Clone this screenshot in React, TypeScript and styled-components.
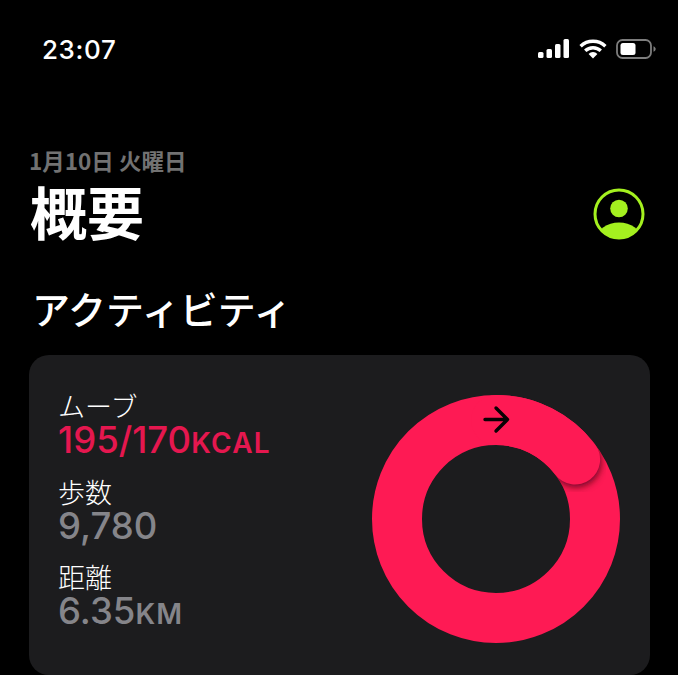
import React from "react";
import styled, { createGlobalStyle } from "styled-components";

const CJK = `"Noto Sans CJK JP", "Liberation Sans", sans-serif`;
const LATIN = `Inter, "Liberation Sans", "Noto Sans CJK JP", sans-serif`;

const App = () => (
  <>
    <GlobalStyle />
    <Page>
      <StatusBar>
        <Time>23:07</Time>
        <StatusIcons>
          <SignalIcon />
          <WifiIcon />
          <BatteryIcon />
        </StatusIcons>
      </StatusBar>

      <Header>
        <div>
          <DateLine>1月10日 火曜日</DateLine>
          <Title>概要</Title>
        </div>
        <ProfileIcon />
      </Header>

      <SectionTitle>アクティビティ</SectionTitle>

      <Card>
        <Stats>
          <Stat>
            <Label>ムーブ</Label>
            <Value $accent>
              195/170<Unit>KCAL</Unit>
            </Value>
          </Stat>
          <Stat>
            <Label>歩数</Label>
            <Value>9,780</Value>
          </Stat>
          <Stat>
            <Label>距離</Label>
            <Value>
              6.35<Unit>KM</Unit>
            </Value>
          </Stat>
        </Stats>
        <MoveRing />
      </Card>
    </Page>
  </>
);

export default App;

const SignalIcon = () => (
  <svg width="32" height="20" viewBox="0 0 32 20" fill="#fff">
    <rect x="0" y="13" width="5.5" height="6" rx="1.5" />
    <rect x="8.5" y="10" width="5.5" height="9" rx="1.5" />
    <rect x="17" y="5" width="5.5" height="14" rx="1.5" />
    <rect x="25.5" y="0" width="5.5" height="19" rx="1.5" />
  </svg>
);

const WifiIcon = () => (
  <svg width="28" height="20" viewBox="0 0 28 20" fill="none" stroke="#fff" strokeWidth="3.4">
    <path d="M1.6 7.2a18 18 0 0 1 24.8 0" />
    <path d="M6.2 11.8a11.4 11.4 0 0 1 15.6 0" />
    <path d="M14 19.4l-4.4-4.5a6.2 6.2 0 0 1 8.8 0z" fill="#fff" stroke="none" />
  </svg>
);

const BatteryIcon = () => (
  <svg width="40" height="20" viewBox="0 0 40 20" fill="none">
    <rect x="1" y="1" width="34" height="18" rx="5.5" stroke="#7d7d7d" strokeWidth="1.8" />
    <rect x="4.5" y="4" width="15" height="12" rx="2.5" fill="#fff" />
    <path d="M37.5 7.2v5.6c1.3-.5 2.2-1.6 2.2-2.8s-.9-2.3-2.2-2.8z" fill="#7d7d7d" />
  </svg>
);

const ProfileIcon = () => (
  <ProfileSvg width="52" height="52" viewBox="0 0 52 52">
    <defs>
      <clipPath id="profileClip">
        <circle cx="26" cy="26" r="24" />
      </clipPath>
    </defs>
    <circle cx="26" cy="26" r="24" fill="none" stroke="#a4f01f" strokeWidth="3" />
    <circle cx="26" cy="20.5" r="8.8" fill="#a4f01f" />
    <ellipse cx="26" cy="50.5" rx="22" ry="16" fill="#a4f01f" clipPath="url(#profileClip)" />
  </ProfileSvg>
);

const MoveRing = () => (
  <RingSvg width="250" height="250" viewBox="0 0 250 250">
    <defs>
      <filter id="capBlur" x="-30%" y="-30%" width="160%" height="160%">
        <feGaussianBlur stdDeviation="3.5" />
      </filter>
      <mask id="ringMask">
        <circle cx="125" cy="125" r="99" fill="none" stroke="#fff" strokeWidth="50" />
      </mask>
    </defs>
    <circle cx="125" cy="125" r="99" fill="none" stroke="#fe1a54" strokeWidth="50" />
    <g mask="url(#ringMask)">
      <circle cx="205" cy="68" r="25" fill="#3a0412" fillOpacity="0.75" filter="url(#capBlur)" />
    </g>
    <path
      d="M125 26A99 99 0 0 1 204.1 65.5"
      fill="none"
      stroke="#fe1a54"
      strokeWidth="50"
      strokeLinecap="round"
    />
    <path
      d="M114 25.5H136.5M125 14l11.5 11.5L125 37"
      fill="none"
      stroke="#0a0204"
      strokeWidth="3.4"
      strokeLinecap="round"
      strokeLinejoin="round"
    />
  </RingSvg>
);

const GlobalStyle = createGlobalStyle`
  html, body {
    margin: 0;
    background: #000;
  }
`;

const Page = styled.div`
  width: 678px;
  height: 675px;
  overflow: hidden;
  background: #000;
  color: #fff;
  box-sizing: border-box;
  padding: 30px 28px 0 29px;
`;

const StatusBar = styled.div`
  display: flex;
  align-items: center;
  justify-content: space-between;
  height: 38px;
  padding-left: 13px;
  margin-right: -6px;
`;

const Time = styled.div`
  font-family: ${LATIN};
  font-size: 26px;
  font-weight: 500;
  letter-spacing: 0.6px;
`;

const StatusIcons = styled.div`
  display: flex;
  align-items: center;
  gap: 9px;
`;

const Header = styled.div`
  display: flex;
  align-items: flex-end;
  justify-content: space-between;
  margin-top: 79px;
  padding-right: 5px;
`;

const ProfileSvg = styled.svg`
  flex: none;
  margin-bottom: 2px;
`;

const DateLine = styled.div`
  font-family: ${CJK};
  font-size: 22.5px;
  line-height: 26px;
  font-weight: 700;
  color: #727272;
`;

const Title = styled.h1`
  margin: 5px 0 0;
  font-family: ${CJK};
  font-size: 57px;
  line-height: 64px;
  font-weight: 700;
  padding-left: 1px;
`;

const SectionTitle = styled.h2`
  margin: 43px 0 0 3px;
  font-family: ${CJK};
  font-size: 38px;
  line-height: 46px;
  font-weight: 500;
`;

const Card = styled.section`
  display: flex;
  align-items: flex-start;
  justify-content: space-between;
  box-sizing: border-box;
  height: 320px;
  margin-top: 24px;
  padding: 37px 29px 0 29px;
  border-radius: 20px;
  background: #1c1c1e;
`;

const Stats = styled.div`
  display: flex;
  flex-direction: column;
  gap: 16.5px;
`;

const Stat = styled.div`
  display: flex;
  flex-direction: column;
`;

const Label = styled.div`
  font-family: ${CJK};
  font-size: 27px;
  line-height: 28px;
  font-weight: 300;
  color: #fff;
`;

const Value = styled.div<{ $accent?: boolean }>`
  font-family: ${LATIN};
  font-size: 36.5px;
  font-weight: 450;
  line-height: 41px;
  color: ${(p) => (p.$accent ? "#e5174f" : "#85858a")};
`;

const Unit = styled.span`
  font-size: 28px;
  line-height: 1;
  font-weight: 600;
  letter-spacing: 1.2px;
`;

const RingSvg = styled.svg`
  flex: none;
  margin-top: 2px;
`;
